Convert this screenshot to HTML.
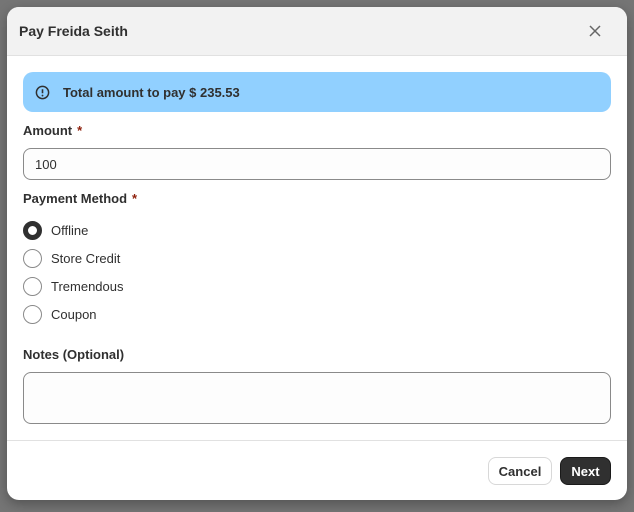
<!DOCTYPE html>
<html><head><style>
*{box-sizing:border-box;margin:0;padding:0}
body{width:634px;height:512px;background:#757575;font-family:"Liberation Sans",sans-serif;position:relative;overflow:hidden;color:#303030}
.m{position:absolute;left:7px;top:7px;width:620px;height:493px;background:#fff;border-radius:12px;overflow:hidden;box-shadow:0 4px 12px rgba(0,0,0,.3)}
.h{height:49px;background:#f2f2f2;border-bottom:1px solid #e1e1e1;position:relative}
.h span{position:absolute;left:12px;top:16px;font-size:14px;font-weight:bold;color:#303030}
.x{position:absolute;left:580px;top:16px}
.b{position:absolute;left:16px;top:65px;width:588px;height:40px;background:#91d0ff;border-radius:10px}
.b span{position:absolute;left:40px;top:13px;font-size:13px;font-weight:bold}
.lbl{position:absolute;left:16px;font-size:13px;font-weight:bold}
.lbl i{color:#8e1f0b;font-style:normal;margin-left:5px}
.in{position:absolute;left:16px;width:588px;background:#fdfdfd;border:1px solid #8a8a8a;border-radius:8px;font-size:13px}
.r{position:absolute;left:16px;font-size:13px;height:20px;width:200px;white-space:nowrap}
.r b{position:absolute;left:0;top:0;width:19px;height:19px;border:1px solid #8a8a8a;border-radius:50%}
.r span{position:absolute;left:28px;top:2px}
.f{position:absolute;left:0;top:433px;width:620px;border-top:1px solid #e1e1e1}
.btn{position:absolute;top:450px;height:28px;border-radius:8px;font-size:13px;font-weight:bold;text-align:center;line-height:27px}
</style></head><body>
<div class="m">
<div class="h"><span>Pay Freida Seith</span>
<svg class="x" width="16" height="16" viewBox="0 0 16 16"><path d="M3 3L13 13M13 3L3 13" stroke="#666" stroke-width="1.5"/></svg></div>
<div class="b"><svg style="position:absolute;left:12px;top:13px" width="15" height="15" viewBox="0 0 16 16"><circle cx="8" cy="8" r="6.5" fill="none" stroke="#303030" stroke-width="1.6"/><path d="M8 4.5v4.3" stroke="#303030" stroke-width="1.7"/><circle cx="8" cy="11.2" r="1" fill="#303030"/></svg><span>Total amount to pay $ 235.53</span></div>
<div class="lbl" style="top:116px">Amount<i>*</i></div>
<div class="in" style="top:141px;height:32px;padding:8px 11px">100</div>
<div class="lbl" style="top:184px">Payment Method<i>*</i></div>
<div class="r" style="top:214px"><b style="border:5px solid #303030"></b><span>Offline</span></div>
<div class="r" style="top:242px"><b></b><span>Store Credit</span></div>
<div class="r" style="top:270px"><b></b><span>Tremendous</span></div>
<div class="r" style="top:298px"><b></b><span>Coupon</span></div>
<div class="lbl" style="top:340px">Notes (Optional)</div>
<div class="in" style="top:365px;height:52px"></div>
<div class="f"></div>
<div class="btn" style="left:481px;width:64px;border:1px solid #d8d8d8;background:#fff;color:#303030">Cancel</div>
<div class="btn" style="left:553px;width:51px;background:#303030;color:#fff;border:1px solid #1a1a1a">Next</div>
</div>
</body></html>
